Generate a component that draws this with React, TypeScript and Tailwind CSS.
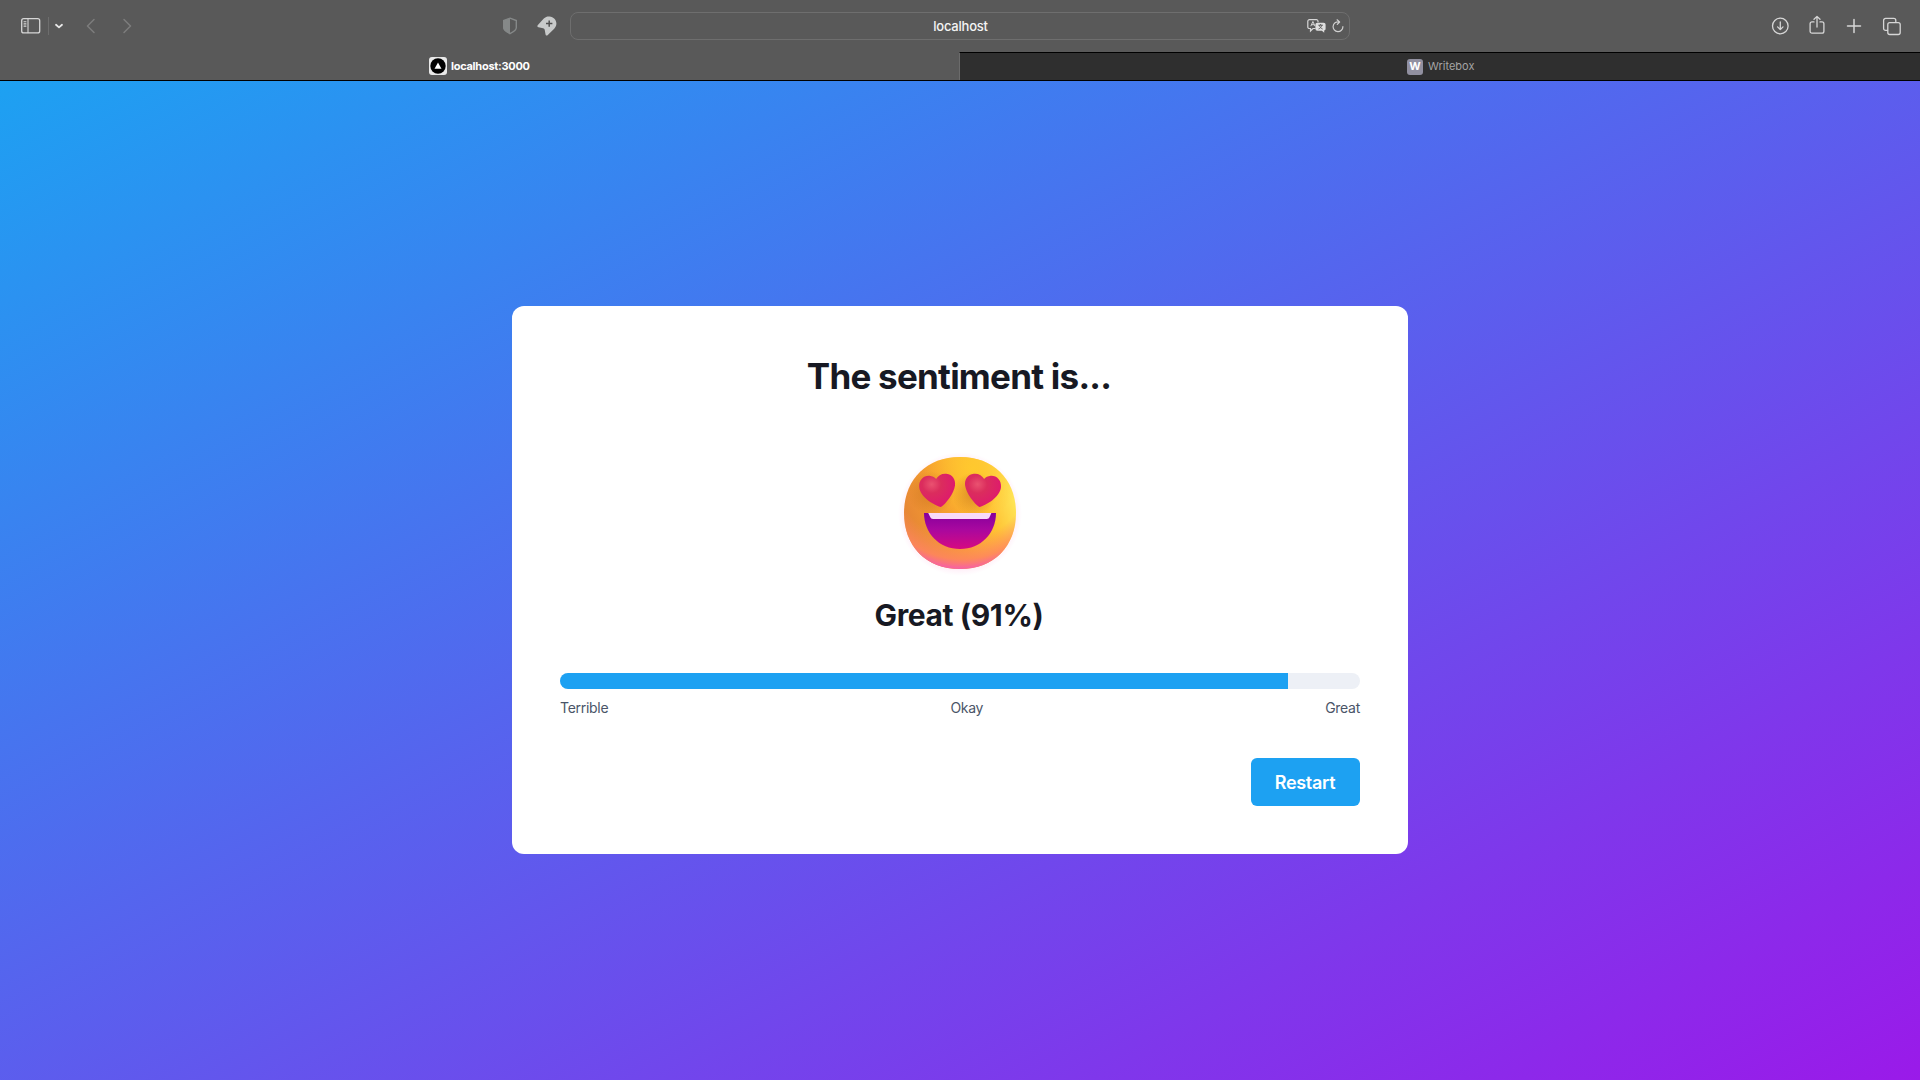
import React from "react";

const stroke = {
  fill: "none",
  stroke: "#d6d6d6",
  strokeWidth: 1.3,
  strokeLinecap: "round" as const,
  strokeLinejoin: "round" as const,
};

function Toolbar() {
  return (
    <div className="flex h-[52px] items-center">
      <div className="flex w-[570px] shrink-0 items-center">
        <svg className="ml-[20px] h-[18px] w-[22px]" viewBox="0 0 22 18" {...stroke}>
          <rect x="1.7" y="1.7" width="18" height="14.2" rx="2" />
          <path d="M8 2v13.600M4 4.700h2M4 6.900h2M4 9.100h2" strokeWidth="1.100" />
        </svg>
        <div className="ml-[6px] h-[18px] w-px bg-[#6d6d6d]" />
        <svg className="ml-[5px] h-[10px] w-[10px]" viewBox="0 0 10 10" {...stroke} stroke="#e8e8e8" strokeWidth="1.8">
          <path d="M2 3.800l3 2.600 3-2.600" />
        </svg>
        <svg className="ml-[21px] h-[18px] w-[12px]" viewBox="0 0 12 18" {...stroke} stroke="#7d7d7d" strokeWidth="1.5">
          <path d="M9 2.500L2.500 9 9 15.500" />
        </svg>
        <svg className="ml-[25px] h-[18px] w-[12px]" viewBox="0 0 12 18" {...stroke} stroke="#7d7d7d" strokeWidth="1.5">
          <path d="M2 2.500L8.500 9 2 15.500" />
        </svg>
        <svg className="ml-[368px] h-[18px] w-[16px]" viewBox="0 0 16 18">
          <path d="M8 1.200L14.300 3.600v7.200c0 2-3 4.200-6.300 5.900-3.300-1.700-6.300-3.900-6.300-5.900V3.600z" fill="none" stroke="#858888" strokeWidth="1.400" />
          <path d="M8 1v16C4 15 1.200 13 1.200 10.800V3.500z" fill="#858888" />
        </svg>
        <svg className="ml-[19px] h-[20px] w-[20px]" viewBox="0 0 20 20">
          <path
            d="M1.100 8.700L6.800 2.600C8.500.8 10.600.3 12.500.5c4 .3 6.900 3.400 6.900 7 0 2-.8 3.700-2.200 5.200l-6.400 6.300c-1 .9-2.100.6-2.300-.7l-.8-4.500c-.2-.9-.8-1.500-1.600-1.600l-4.600-.9c-1.300-.3-1.500-1.500-.4-2.600z"
            fill="#c8caca"
          />
          <path d="M12.200 4.400v6.400M9 7.600h6.400" stroke="#505050" strokeWidth="1.500" />
        </svg>
      </div>

      <div className="flex h-[28px] w-[780px] shrink-0 items-center rounded-[8px] border border-[#6e6e6e]">
        <div className="w-[732px] pl-[47px] text-center text-[13px] leading-[16px] font-medium tracking-[-0.22px] text-[#f4f4f4]">localhost</div>
        <svg className="ml-[4px] h-[14px] w-[19px]" viewBox="0 0 19 14">
          <path d="M8.500 9.500H6L3.500 12V9.500H2.500A1.600 1.600 0 01.8 7.900V2.300A1.600 1.600 0 012.500.7h6.800A1.600 1.600 0 0111 2.300v1" fill="none" stroke="#d6d6d6" strokeWidth="1.200" />
          <path d="M3.800 7.200L5.900 2.500 8 7.200M4.600 5.700h2.600" fill="none" stroke="#d6d6d6" strokeWidth="1" />
          <path d="M10.300 3.700h6.400a1.900 1.900 0 011.900 1.900v4.200a1.800 1.800 0 01-1.400 1.800v2.200l-2.300-2.100h-4.600a1.900 1.900 0 01-1.900-1.900V5.600a1.900 1.900 0 011.900-1.900z" fill="#dedede" />
          <path d="M11.300 6.200h4.600M13.600 5v1.200M11.500 10c2-.8 3-2 3.300-3.800M12.400 6.300c.4 1.800 1.400 2.900 3.200 3.700" fill="none" stroke="#555" strokeWidth=".9" />
        </svg>
        <svg className="ml-[6px] h-[14px] w-[12px]" viewBox="0 0 12 14" {...stroke} stroke="#d0d0d0" strokeWidth="1.200">
          <path d="M6.800 2.900A4.900 4.900 0 1010.900 7.700M5.100.8l2.500 2.200-2.300 2.400" />
        </svg>
      </div>

      <div className="ml-auto flex w-[131px] shrink-0 items-center justify-between mr-[18px]">
        <svg className="h-[18px] w-[18px]" viewBox="0 0 18 18" {...stroke}>
          <circle cx="9.300" cy="9" r="7.800" />
          <path d="M9.300 5v7.500M6.600 9.900l2.700 2.700 2.700-2.700" />
        </svg>
        <svg className="mb-[2px] h-[20px] w-[16px]" viewBox="0 0 16 20" {...stroke}>
          <path d="M5 6.900H3A1.900 1.900 0 001.100 8.800v7.500A1.900 1.900 0 003 18.200h10a1.900 1.900 0 001.900-1.900V8.800A1.900 1.900 0 0013 6.900h-2M8 12V1.600M5 4.300l3-2.900 3 2.900" />
        </svg>
        <svg className="mb-px h-[16px] w-[16px]" viewBox="0 0 16 16" {...stroke} strokeWidth="1.500">
          <path d="M8 1.500v13M1.500 8h13" />
        </svg>
        <svg className="h-[19px] w-[20px]" viewBox="0 0 20 19" {...stroke}>
          <rect x="5.800" y="5.600" width="12.400" height="11.900" rx="2" />
          <path d="M5.500 13.400H3.600a2 2 0 01-2-2v-8a2 2 0 012-2h8.200a2 2 0 012 2v2" />
        </svg>
      </div>
    </div>
  );
}

function Tabs() {
  return (
    <div className="flex h-[28px]">
      <div className="flex w-[959px] items-center pl-[429px] text-[11px] font-bold text-white">
        <span className="flex h-[18px] w-[18px] items-center justify-center rounded-[3px] bg-[#e9e9e9]">
          <svg className="h-4 w-4" viewBox="0 0 16 16">
            <circle cx="8" cy="8" r="7.700" fill="#000" />
            <path d="M8 4.500l3.500 6.200h-7z" fill="#fff" />
          </svg>
        </span>
        <span className="ml-[4px] tracking-[-0.27px]">localhost:3000</span>
      </div>
      <div className="flex flex-1 items-center border-t border-l border-t-black border-l-[#6b6b6b] bg-[#2f2f2f] pl-[447px] text-[11px] text-[#a4a4a4]">
        <span className="flex h-4 w-4 items-center justify-center rounded-[3px] bg-[#9190a0] text-[11px] font-bold text-white">W</span>
        <span className="ml-[5px]">Writebox</span>
      </div>
    </div>
  );
}

function HeartEyes() {
  const head = "M64 8C98 8 120 31 120 64s-22 56-56 56S8 97 8 64 30 8 64 8z";
  return (
    <svg className="h-[128px] w-[128px]" viewBox="0 0 128 128">
      <defs>
        <linearGradient id="face" x1="0.05" y1="0.65" x2="0.95" y2="0.3">
          <stop offset="0" stopColor="#e68535" />
          <stop offset="0.45" stopColor="#f8a52e" />
          <stop offset="0.75" stopColor="#ffc234" />
          <stop offset="1" stopColor="#ffe456" />
        </linearGradient>
        <radialGradient id="chin" cx="0.52" cy="0.12" r="0.9">
          <stop offset="0.68" stopColor="#ff8b5e" stopOpacity="0" />
          <stop offset="0.88" stopColor="#ff8560" stopOpacity="0.85" />
          <stop offset="0.97" stopColor="#f763a0" />
        </radialGradient>
        <radialGradient id="top" cx="0.62" cy="0.1" r="0.45">
          <stop offset="0" stopColor="#ffc92e" />
          <stop offset="1" stopColor="#ffc02e" stopOpacity="0" />
        </radialGradient>
        <radialGradient id="shade" cx="0.5" cy="0.5" r="0.5">
          <stop offset="0" stopColor="#c9701f" stopOpacity="0.65" />
          <stop offset="1" stopColor="#c9701f" stopOpacity="0" />
        </radialGradient>
        <radialGradient id="heart" cx="0.35" cy="0.32" r="0.75">
          <stop offset="0" stopColor="#ea5270" />
          <stop offset="0.35" stopColor="#db2d5d" />
          <stop offset="1" stopColor="#df1670" />
        </radialGradient>
        <linearGradient id="mouth" x1="0" y1="0" x2="0" y2="1">
          <stop offset="0" stopColor="#86009c" />
          <stop offset="0.45" stopColor="#a8089f" />
          <stop offset="1" stopColor="#d60a81" />
        </linearGradient>
        <radialGradient id="glow" cx="0.5" cy="0.5" r="0.5">
          <stop offset="0.87" stopColor="#ffd0ea" stopOpacity="0.4" />
          <stop offset="1" stopColor="#ffd8ef" stopOpacity="0" />
        </radialGradient>
      </defs>
      <circle cx="64" cy="65" r="62" fill="url(#glow)" />
      <path d={head} fill="url(#face)" />
      <path d={head} fill="url(#top)" />
      <path d={head} fill="url(#chin)" />
      <ellipse cx="35" cy="44" rx="23" ry="22" fill="url(#shade)" />
      <ellipse cx="78" cy="45" rx="22" ry="22" fill="url(#shade)" />
      <path d="M45 58C39 56.500 24 48.500 23.200 38c-.6-7 4.500-11.700 10.200-11.300 3 .3 5.100 1.500 6.700 3.300 1.900-3.700 5.800-5.800 10.300-5.300 6.300.7 9.300 6 8.600 11.700C58 44.500 50 54.500 45 58z" fill="url(#heart)" />
      <path d="M83.300 58c-5-3.500-13.100-13.500-14.200-21.600-.7-5.700 2.400-11 8.700-11.700 4.500-.5 8.400 1.600 10.300 5.300 1.600-1.800 3.700-3 6.700-3.300 5.700-.4 10.800 4.300 10.200 11.300-.8 10.500-15.700 18.500-21.700 20z" fill="url(#heart)" />
      <path d="M28 64h72c0 20-15 36-36 36S28 84 28 64z" fill="url(#mouth)" />
      <path d="M32.200 64h63.200l-1.800 4.100c-.5 1.200-1.400 1.900-2.800 1.900H37c-1.400 0-2.300-.7-2.800-1.900z" fill="#f8daf9" />
    </svg>
  );
}

export default function App() {
  const score = 91;
  return (
    <div className="flex h-[1080px] w-[1920px] flex-col overflow-hidden bg-[#595959] font-['Inter',sans-serif]">
      <Toolbar />
      <Tabs />
      <main className="flex flex-1 items-start justify-center border-t border-black bg-[linear-gradient(to_bottom_right,#1DA1F2,#9A1AE9)] pt-[225px]">
        <section className="flex h-[548px] w-[896px] flex-col rounded-xl bg-white px-12 pt-[49px] text-[#171923]">
          <h1 className="pr-[2px] text-center text-[35px] leading-[43px] font-bold tracking-[-0.75px]">The sentiment is...</h1>
          <div className="mt-[51px] flex justify-center">
            <HeartEyes />
          </div>
          <h2 className="mt-[18px] pr-[2px] text-center text-3xl leading-[40px] font-bold tracking-[-0.4px]">Great ({score}%)</h2>
          <div className="mt-[38px] h-4 overflow-hidden rounded-full bg-[#EDF0F6]">
            <div className="h-full bg-[#1DA1F2]" style={{ width: `${score}%` }} />
          </div>
          <div className="mt-2 flex justify-between text-sm leading-[21px] tracking-[-0.28px] text-[#4A5568]">
            <span>Terrible</span>
            <span>Okay</span>
            <span>Great</span>
          </div>
          <button className="mt-[40px] h-12 w-[109px] self-end rounded-md bg-[#1DA1F2] pt-[2px] pr-px text-lg font-semibold tracking-[-0.3px] text-white">Restart</button>
        </section>
      </main>
    </div>
  );
}
